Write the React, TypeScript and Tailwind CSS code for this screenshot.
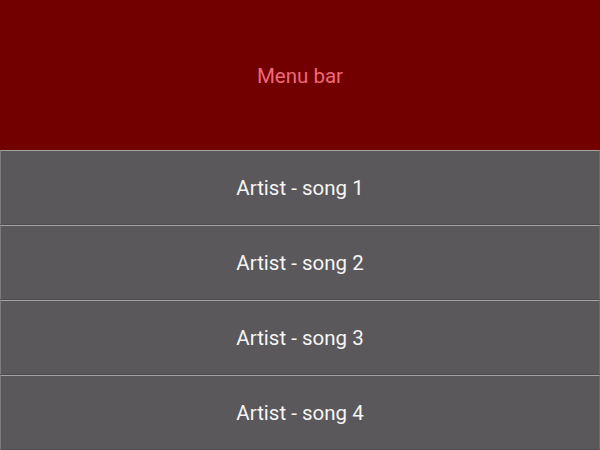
const songs = ['Artist - song 1', 'Artist - song 2', 'Artist - song 3', 'Artist - song 4'];

export default function App() {
    return (
        <div className="w-[600px] h-[450px] flex flex-col bg-[#5a585b] font-['Roboto',sans-serif]">
            <div className="h-[150px] bg-[#720000] flex items-center justify-center pt-[2px]">
                <span className="text-[20.5px] text-[#f06878]">Menu bar</span>
            </div>
            {songs.map((song) => (
                <div
                    key={song}
                    className="h-[75px] flex items-center justify-center pt-[2px] bg-[#5a585b] border-t border-t-[#a3a3a3] border-l border-l-[#7c7b7d] border-b border-b-[#4c4b4d] border-r border-r-[#6a696b]"
                >
                    <span className="text-[20.5px] text-[#f5f5f5]">{song}</span>
                </div>
            ))}
        </div>
    );
}
